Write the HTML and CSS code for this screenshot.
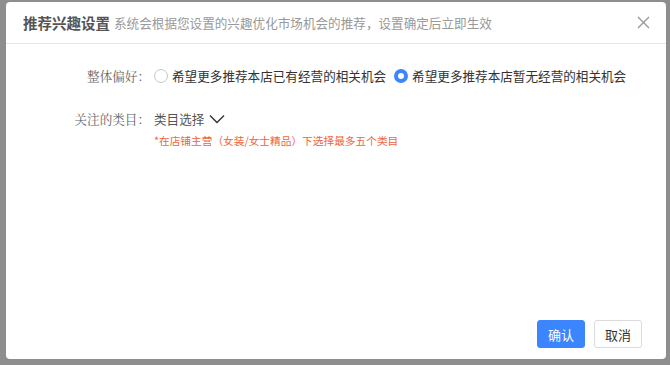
FILE: index.html
```html
<!DOCTYPE html>
<html lang="zh-CN">
<head>
  <meta charset="UTF-8" />
  <title>推荐兴趣设置</title>
  <link rel="stylesheet" href="styles.css">
</head>
<body>
  <div class="modal">
    <div class="modal-header">
      <span class="modal-title">推荐兴趣设置</span>
      <span class="modal-sub">系统会根据您设置的兴趣优化市场机会的推荐，设置确定后立即生效</span>
      <span class="close">
        <svg width="13" height="13" viewBox="0 0 13 13"><path d="M1 1L12 12M12 1L1 12" stroke="#999" stroke-width="1.4" fill="none"/></svg>
      </span>
    </div>
    <div class="modal-body">
      <div class="form-row">
        <div class="label">整体偏好：</div>
        <div class="field radios">
          <label class="radio"><span class="dot"></span>希望更多推荐本店已有经营的相关机会</label>
          <label class="radio checked"><span class="dot"></span>希望更多推荐本店暂无经营的相关机会</label>
        </div>
      </div>
      <div class="form-row cat-row">
        <div class="label">关注的类目：</div>
        <div class="field">
          <div class="select">类目选择
            <svg width="16" height="10" viewBox="0 0 16 10"><path d="M1 1.5L8 8.5L15 1.5" stroke="#333" stroke-width="1.4" fill="none"/></svg>
          </div>
          <div class="hint">*在店铺主营（女装/女士精品）下选择最多五个类目</div>
        </div>
      </div>
    </div>
    <div class="modal-footer">
      <button class="btn primary">确认</button>
      <button class="btn">取消</button>
    </div>
  </div>
</body>
</html>
```

FILE: styles.css
```css
body {
  margin: 0;
  width: 670px;
  height: 365px;
  background: #8e8e8e;
  font-family: "Noto Sans CJK SC", "Liberation Sans", sans-serif;
  padding: 2px 0 0 6px;
  box-sizing: border-box;
}
.modal {
  width: 660px;
  height: 357px;
  background: #fff;
  border-radius: 4px;
  display: flex;
  flex-direction: column;
}
.modal-header {
  height: 41px;
  border-bottom: 1px solid #e6e6e6;
  display: flex;
  align-items: center;
  padding: 0 17px;
}
.modal-title {
  font-size: 14.5px;
  font-weight: bold;
  color: #555;
  margin-right: 4px;
}
.modal-sub {
  font-size: 12.6px;
  color: #999;
}
.close {
  margin-left: auto;
  display: flex;
  margin-right: -1px;
}
.modal-body {
  flex: 1;
  padding-top: 21px;
}
.form-row {
  display: flex;
  font-size: 12.6px;
}
.label {
  width: 144px;
  text-align: right;
  color: #666;
  font-family: "Noto Serif CJK SC", "Noto Sans CJK SC", serif;
  line-height: 22px;
}
.field {
  padding-left: 4px;
}
.radios {
  display: flex;
  gap: 8px;
}
.radio {
  display: flex;
  align-items: center;
  color: #333;
  line-height: 22px;
}
.dot {
  width: 12px;
  height: 12px;
  border: 1px solid #c8c8c8;
  border-radius: 50%;
  margin-right: 4px;
  box-sizing: content-box;
}
.radio.checked .dot {
  width: 6px;
  height: 6px;
  border: 4px solid #3b86ff;
  background: #fff;
}
.cat-row {
  margin-top: 21px;
}
.select {
  display: flex;
  align-items: center;
  gap: 5px;
  color: #555;
  line-height: 22px;
}
.hint {
  font-size: 10.7px;
  color: #f0643c;
  line-height: 14px;
  margin-top: 4px;
}
.modal-footer {
  display: flex;
  justify-content: flex-end;
  gap: 9px;
  padding: 0 24px 11px 0;
}
.btn {
  width: 48px;
  height: 28px;
  font-family: inherit;
  font-size: 13px;
  border: 1px solid #dcdcdc;
  border-radius: 3px;
  background: #fff;
  color: #333;
  padding: 0;
}
.btn.primary {
  background: #3b86ff;
  border-color: #3b86ff;
  color: #fff;
}
```
